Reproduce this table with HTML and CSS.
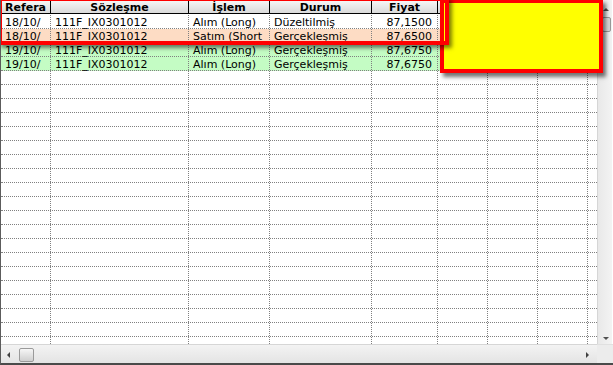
FILE: index.html
```html
<!DOCTYPE html>
<html>
<head>
<meta charset="utf-8">
<link rel="stylesheet" href="styles.css">
</head>
<body>
<div class="frame">
  <div class="main">
    <div class="grid">
      <div class="row head">
        <div class="c c1">Refera</div>
        <div class="c c2">Sözleşme</div>
        <div class="c c3">İşlem</div>
        <div class="c c4">Durum</div>
        <div class="c c5">Fiyat</div>
        <div class="c c6"></div>
        <div class="c c7"></div>
        <div class="c c8"></div>
        <div class="c c9"></div>
      </div>
      <div class="row white">
        <div class="c c1">18/10/</div>
        <div class="c c2">111F_IX0301012</div>
        <div class="c c3">Alım (Long)</div>
        <div class="c c4">Düzeltilmiş</div>
        <div class="c c5 num">87,1500</div>
        <div class="c c6"></div><div class="c c7"></div><div class="c c8"></div><div class="c c9"></div>
      </div>
      <div class="row peach">
        <div class="c c1">18/10/</div>
        <div class="c c2">111F_IX0301012</div>
        <div class="c c3">Satım (Short</div>
        <div class="c c4">Gerçekleşmiş</div>
        <div class="c c5 num">87,6500</div>
        <div class="c c6"></div><div class="c c7"></div><div class="c c8"></div><div class="c c9"></div>
      </div>
      <div class="row green">
        <div class="c c1">19/10/</div>
        <div class="c c2">111F_IX0301012</div>
        <div class="c c3">Alım (Long)</div>
        <div class="c c4">Gerçekleşmiş</div>
        <div class="c c5 num">87,6750</div>
        <div class="c c6"></div><div class="c c7"></div><div class="c c8"></div><div class="c c9"></div>
      </div>
      <div class="row green">
        <div class="c c1">19/10/</div>
        <div class="c c2">111F_IX0301012</div>
        <div class="c c3">Alım (Long)</div>
        <div class="c c4">Gerçekleşmiş</div>
        <div class="c c5 num">87,6750</div>
        <div class="c c6"></div><div class="c c7"></div><div class="c c8"></div><div class="c c9"></div>
      </div>
      <div class="row"><div class="c c1"></div><div class="c c2"></div><div class="c c3"></div><div class="c c4"></div><div class="c c5"></div><div class="c c6"></div><div class="c c7"></div><div class="c c8"></div><div class="c c9"></div></div>
      <div class="row"><div class="c c1"></div><div class="c c2"></div><div class="c c3"></div><div class="c c4"></div><div class="c c5"></div><div class="c c6"></div><div class="c c7"></div><div class="c c8"></div><div class="c c9"></div></div>
      <div class="row"><div class="c c1"></div><div class="c c2"></div><div class="c c3"></div><div class="c c4"></div><div class="c c5"></div><div class="c c6"></div><div class="c c7"></div><div class="c c8"></div><div class="c c9"></div></div>
      <div class="row"><div class="c c1"></div><div class="c c2"></div><div class="c c3"></div><div class="c c4"></div><div class="c c5"></div><div class="c c6"></div><div class="c c7"></div><div class="c c8"></div><div class="c c9"></div></div>
      <div class="row"><div class="c c1"></div><div class="c c2"></div><div class="c c3"></div><div class="c c4"></div><div class="c c5"></div><div class="c c6"></div><div class="c c7"></div><div class="c c8"></div><div class="c c9"></div></div>
      <div class="row"><div class="c c1"></div><div class="c c2"></div><div class="c c3"></div><div class="c c4"></div><div class="c c5"></div><div class="c c6"></div><div class="c c7"></div><div class="c c8"></div><div class="c c9"></div></div>
      <div class="row"><div class="c c1"></div><div class="c c2"></div><div class="c c3"></div><div class="c c4"></div><div class="c c5"></div><div class="c c6"></div><div class="c c7"></div><div class="c c8"></div><div class="c c9"></div></div>
      <div class="row"><div class="c c1"></div><div class="c c2"></div><div class="c c3"></div><div class="c c4"></div><div class="c c5"></div><div class="c c6"></div><div class="c c7"></div><div class="c c8"></div><div class="c c9"></div></div>
      <div class="row"><div class="c c1"></div><div class="c c2"></div><div class="c c3"></div><div class="c c4"></div><div class="c c5"></div><div class="c c6"></div><div class="c c7"></div><div class="c c8"></div><div class="c c9"></div></div>
      <div class="row"><div class="c c1"></div><div class="c c2"></div><div class="c c3"></div><div class="c c4"></div><div class="c c5"></div><div class="c c6"></div><div class="c c7"></div><div class="c c8"></div><div class="c c9"></div></div>
      <div class="row"><div class="c c1"></div><div class="c c2"></div><div class="c c3"></div><div class="c c4"></div><div class="c c5"></div><div class="c c6"></div><div class="c c7"></div><div class="c c8"></div><div class="c c9"></div></div>
      <div class="row"><div class="c c1"></div><div class="c c2"></div><div class="c c3"></div><div class="c c4"></div><div class="c c5"></div><div class="c c6"></div><div class="c c7"></div><div class="c c8"></div><div class="c c9"></div></div>
      <div class="row"><div class="c c1"></div><div class="c c2"></div><div class="c c3"></div><div class="c c4"></div><div class="c c5"></div><div class="c c6"></div><div class="c c7"></div><div class="c c8"></div><div class="c c9"></div></div>
      <div class="row"><div class="c c1"></div><div class="c c2"></div><div class="c c3"></div><div class="c c4"></div><div class="c c5"></div><div class="c c6"></div><div class="c c7"></div><div class="c c8"></div><div class="c c9"></div></div>
      <div class="row"><div class="c c1"></div><div class="c c2"></div><div class="c c3"></div><div class="c c4"></div><div class="c c5"></div><div class="c c6"></div><div class="c c7"></div><div class="c c8"></div><div class="c c9"></div></div>
      <div class="row"><div class="c c1"></div><div class="c c2"></div><div class="c c3"></div><div class="c c4"></div><div class="c c5"></div><div class="c c6"></div><div class="c c7"></div><div class="c c8"></div><div class="c c9"></div></div>
      <div class="row"><div class="c c1"></div><div class="c c2"></div><div class="c c3"></div><div class="c c4"></div><div class="c c5"></div><div class="c c6"></div><div class="c c7"></div><div class="c c8"></div><div class="c c9"></div></div>
      <div class="row"><div class="c c1"></div><div class="c c2"></div><div class="c c3"></div><div class="c c4"></div><div class="c c5"></div><div class="c c6"></div><div class="c c7"></div><div class="c c8"></div><div class="c c9"></div></div>
      <div class="row"><div class="c c1"></div><div class="c c2"></div><div class="c c3"></div><div class="c c4"></div><div class="c c5"></div><div class="c c6"></div><div class="c c7"></div><div class="c c8"></div><div class="c c9"></div></div>
      <div class="row"><div class="c c1"></div><div class="c c2"></div><div class="c c3"></div><div class="c c4"></div><div class="c c5"></div><div class="c c6"></div><div class="c c7"></div><div class="c c8"></div><div class="c c9"></div></div>
      <div class="row"><div class="c c1"></div><div class="c c2"></div><div class="c c3"></div><div class="c c4"></div><div class="c c5"></div><div class="c c6"></div><div class="c c7"></div><div class="c c8"></div><div class="c c9"></div></div>
    </div>
    <div class="vscroll">
      <div class="arrow-up"></div>
      <div class="vthumb"></div>
      <div class="vspace"></div>
      <div class="arrow-down"></div>
    </div>
  </div>
  <div class="hbar">
    <div class="hscroll">
      <div class="arrow-left"></div>
      <div class="hthumb"></div>
      <div class="hspace"></div>
      <div class="arrow-right"></div>
    </div>
    <div class="corner"></div>
  </div>
  <div class="note"></div>
  <div class="highlight"></div>
</div>
</body>
</html>
```

FILE: styles.css
```css
html, body {
  margin: 0;
  padding: 0;
  background: #ffffff;
}

.frame {
  position: relative;
  width: 613px;
  height: 365px;
  box-sizing: border-box;
  border-left: 1px solid #5c5c5c;
  border-bottom: 2px solid #4a4a4a;
  overflow: hidden;
  font-family: "DejaVu Sans", Verdana, sans-serif;
  font-size: 11px;
  color: #000;
  display: flex;
  flex-direction: column;
}

.main {
  display: flex;
  height: 344px;
  flex: none;
}

.grid {
  width: 596px;
  flex: none;
  overflow: hidden;
  background: #fff;
}

.row {
  display: flex;
  height: 14px;
  box-sizing: border-box;
  border-bottom: 1px dotted #808080;
}

.c {
  box-sizing: border-box;
  line-height: 13px;
  padding-top: 1px;
  border-right: 1px dotted #808080;
  padding-left: 4px;
  white-space: nowrap;
  flex: none;
}

.c1 { width: 50px; }
.c2 { width: 138px; }
.c3 { width: 81px; }
.c4 { width: 102px; }
.c5 { width: 66px; }
.c6 { width: 50px; }
.c7 { width: 50px; }
.c8 { width: 50px; }
.c9 { width: 9px; border-right: none; }

.num {
  text-align: right;
  padding-right: 5px;
}

.head {
  background: linear-gradient(#f8f8f8, #dadada);
  border-bottom: 1px solid #000;
  margin-bottom: 1px;
}

.head .c {
  border-right: 1px solid #000;
  font-weight: bold;
  text-align: center;
  padding-left: 0;
  padding-top: 1px;
}

.head .c9 { border-right: none; }

.white { background: #ffffff; }
.peach { background: #fddcc4; }
.green { background: #c4fcc4; }

/* vertical scrollbar */
.vscroll {
  width: 15px;
  flex: none;
  box-sizing: border-box;
  border-left: 1px solid #d6d6d6;
  background: linear-gradient(90deg, #e9e9e9, #f3f3f3);
  display: flex;
  flex-direction: column;
  align-items: center;
  padding: 8px 0 4px 2px;
}

.arrow-up {
  width: 0;
  height: 0;
  border-left: 3px solid transparent;
  border-right: 3px solid transparent;
  border-bottom: 3px solid #505050;
  flex: none;
}

.vthumb {
  margin-top: 6px;
  width: 9px;
  height: 15px;
  box-sizing: border-box;
  border: 1px solid #9a9a9a;
  border-radius: 2px;
  background: linear-gradient(90deg, #f6f6f6, #d4d4d4);
  flex: none;
}

.vspace { flex: 1; }

.arrow-down {
  width: 0;
  height: 0;
  border-left: 3px solid transparent;
  border-right: 3px solid transparent;
  border-top: 3px solid #505050;
  flex: none;
}

/* horizontal scrollbar */
.hbar {
  display: flex;
  height: 19px;
  flex: none;
}

.hscroll {
  width: 596px;
  flex: none;
  box-sizing: border-box;
  border-top: 1px solid #d6d6d6;
  background: linear-gradient(#f3f3f3, #e4e4e4);
  display: flex;
  align-items: center;
  padding: 1px 8px 0 6px;
}

.arrow-left {
  width: 0;
  height: 0;
  border-top: 3px solid transparent;
  border-bottom: 3px solid transparent;
  border-right: 3px solid #404040;
  flex: none;
}

.hthumb {
  margin-left: 9px;
  width: 15px;
  height: 14px;
  box-sizing: border-box;
  border: 1px solid #9a9a9a;
  border-radius: 2px;
  background: linear-gradient(#f6f6f6, #cfcfcf);
  flex: none;
}

.hspace { flex: 1; }

.arrow-right {
  width: 0;
  height: 0;
  border-top: 3px solid transparent;
  border-bottom: 3px solid transparent;
  border-left: 3px solid #404040;
  flex: none;
}

.corner {
  flex: 1;
  background: #ececec;
  border-top: 1px solid #e0e0e0;
}

/* overlays */
.note {
  position: absolute;
  left: 439px;
  top: -1px;
  width: 163px;
  height: 74px;
  box-sizing: border-box;
  background: #ffff00;
  border: 4px solid #ff0000;
  box-shadow: 3px 4px 4px rgba(0, 0, 0, 0.55);
}

.highlight {
  position: absolute;
  left: -3px;
  top: -3px;
  width: 451px;
  height: 48px;
  box-sizing: border-box;
  border: 4px solid #ff0000;
  box-shadow: 3px 3px 4px rgba(0, 0, 0, 0.5);
}
```
